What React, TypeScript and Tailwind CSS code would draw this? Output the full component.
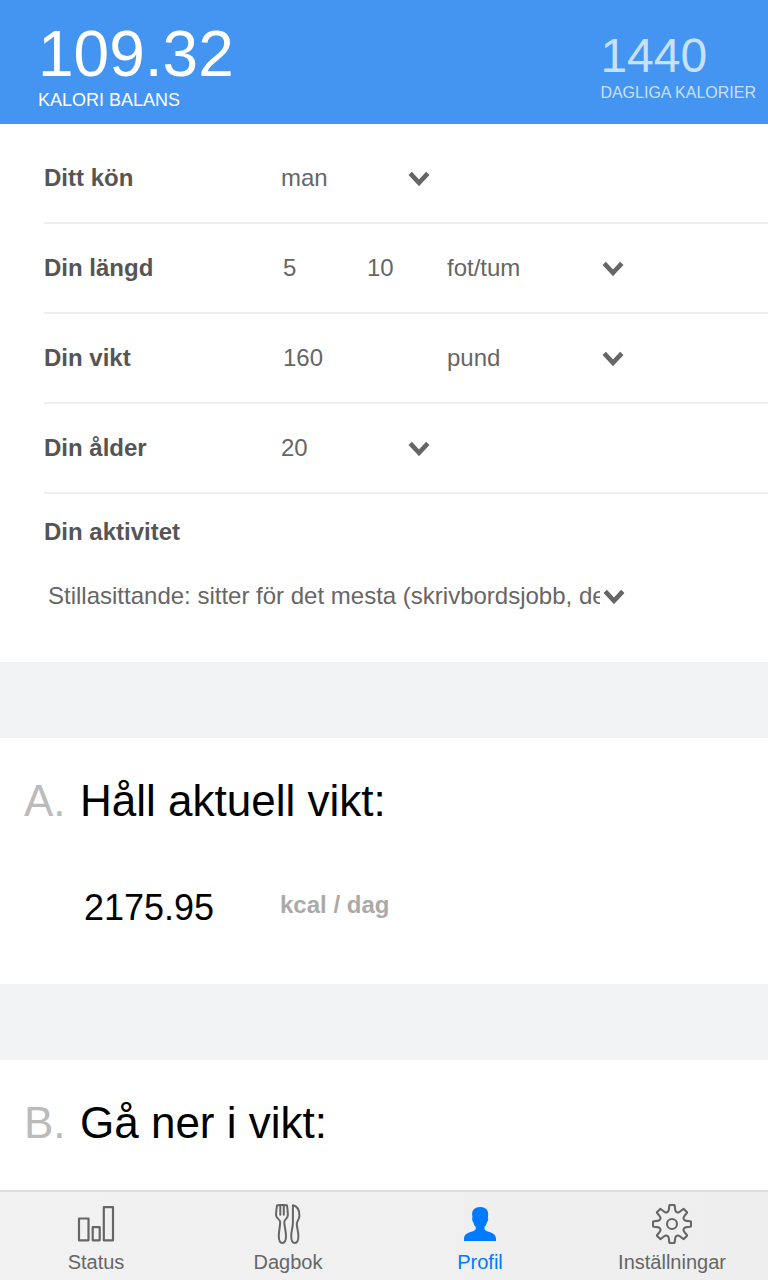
import type { ReactNode, SelectHTMLAttributes } from "react";

function Chevron() {
  return (
    <svg
      viewBox="0 0 22 16"
      className="pointer-events-none absolute right-0 top-1/2 h-4 w-[22px] -translate-y-1/2"
      fill="none"
      stroke="#666666"
      strokeWidth="4.6"
      aria-hidden="true"
    >
      <path d="M2.2 3.4 11 12.8 19.8 3.4" />
    </svg>
  );
}

function Dropdown({
  className,
  selectClassName,
  ...props
}: SelectHTMLAttributes<HTMLSelectElement> & { selectClassName?: string }) {
  return (
    <div className={`relative ${className ?? ""}`}>
      <select
        {...props}
        className={`block h-12 w-full appearance-none truncate bg-transparent text-clip text-[#666666] outline-none ${selectClassName ?? ""}`}
      />
      <Chevron />
    </div>
  );
}

function Row({ label, htmlFor, children }: { label: string; htmlFor: string; children: ReactNode }) {
  return (
    <div className="flex h-[90px] items-center border-b-2 border-[#eeeeee]">
      <label htmlFor={htmlFor} className="w-[237px] shrink-0 font-bold text-[#555555]">
        {label}
      </label>
      {children}
    </div>
  );
}

function StatusIcon() {
  return (
    <svg viewBox="0 0 40 40" className="size-10" fill="none" stroke="currentColor" strokeWidth="2.2" strokeLinejoin="round" aria-hidden="true">
      <rect x="3" y="14.5" width="9.5" height="21.8" />
      <rect x="16.7" y="23.2" width="7" height="13.1" />
      <rect x="27.8" y="3.2" width="9.2" height="33.1" />
    </svg>
  );
}

function DiaryIcon() {
  return (
    <svg viewBox="0 0 40 40" className="size-10" fill="none" stroke="currentColor" strokeWidth="2" strokeLinejoin="round" strokeLinecap="round" aria-hidden="true">
      <path d="M9 1.4C10.5 .8 17.5 .8 19 1.4C19.4 4 19.9 8 19.8 11.5C19.7 14.5 16.4 15.2 16.3 18C16.3 22 18 27 18 32C18 36.5 16.4 38.9 14.3 38.9C12.2 38.9 10.8 36.5 10.8 32C10.8 27 12.2 22 12.2 18C12 15.2 8.3 14.5 8.1 11.5C8 8 8.6 4 9 1.4Z" />
      <path d="M12.3 2V10.8M15.8 2V10.8" />
      <path d="M24.9 1.2C30 2.2 31.4 7 31.4 11.5C31.4 15.5 28.8 17 28.8 20C28.8 23.5 30.4 27.5 30.4 32C30.4 36.5 28.8 38.9 26.8 38.9C24.6 38.9 23.2 36.5 23.2 32C23.2 27 24.9 24 24.9 18Z" />
    </svg>
  );
}

function ProfileIcon() {
  return (
    <svg viewBox="0 0 40 40" className="size-10" fill="currentColor" aria-hidden="true">
      <path d="M20.2 3C25.5 3 28.2 5.8 28.2 10.5C28.2 11.6 27.9 12.3 27.9 13.2C28.6 14.2 28 17.4 27 18.2C26.5 20.6 25.3 22 24.5 23C24.2 25.5 24.8 26.4 27 27.3C31.5 28.8 36 29.8 36 35V37H4V35C4 29.8 8.5 28.8 13 27.3C15.3 26.4 16 25.5 15.8 23C14.8 22 13.7 20.6 13.3 18.2C12.3 17.4 11.7 14.2 12.5 13.2C12.5 12.3 12.1 11.6 12.1 10.5C12.1 5.8 15 3 20.2 3Z" />
    </svg>
  );
}

function gearOutline() {
  const at = (tooth: number, x: number, y: number) => {
    const a = (tooth * Math.PI) / 4;
    const px = 20 + x * Math.cos(a) - y * Math.sin(a);
    const py = 20 + x * Math.sin(a) + y * Math.cos(a);
    return `${px.toFixed(2)} ${py.toFixed(2)}`;
  };
  let d = `M${at(0, -2, -19)}`;
  for (let i = 0; i < 8; i++) {
    d += `L${at(i, 2, -19)}Q${at(i, 2.6, -19)} ${at(i, 2.7, -18.2)}L${at(i, 3.1, -14.6)}`;
    d += `C${at(i, 3.4, -11.6)} ${at(i + 1, -3.4, -11.6)} ${at(i + 1, -3.1, -14.6)}`;
    d += `L${at(i + 1, -2.7, -18.2)}Q${at(i + 1, -2.6, -19)} ${at(i + 1, -2, -19)}`;
  }
  return `${d}Z`;
}

function SettingsIcon() {
  return (
    <svg viewBox="0 0 40 40" className="size-10" fill="none" stroke="currentColor" strokeWidth="2.1" strokeLinejoin="round" aria-hidden="true">
      <path d={gearOutline()} />
      <circle cx="20" cy="20" r="5" />
    </svg>
  );
}

const tabs = [
  { name: "Status", icon: <StatusIcon />, active: false },
  { name: "Dagbok", icon: <DiaryIcon />, active: false },
  { name: "Profil", icon: <ProfileIcon />, active: true },
  { name: "Inställningar", icon: <SettingsIcon />, active: false },
];

export default function App() {
  return (
    <div className="flex h-screen flex-col bg-white font-['Liberation_Sans',Arial,sans-serif] text-2xl">
      <header className="flex h-[124px] shrink-0 justify-between bg-[#4495f1] pl-[38px] pr-3 text-white">
        <div className="flex flex-col pt-[22px]">
          <span className="text-[64px] leading-[64px]">109.32</span>
          <span className="pt-1 text-lg leading-5">KALORI BALANS</span>
        </div>
        <div className="flex flex-col pt-8 text-[#c9e0fb]">
          <span className="text-5xl leading-[48px]">1440</span>
          <span className="pt-1 text-base leading-[18px]">DAGLIGA KALORIER</span>
        </div>
      </header>

      <main className="flex min-h-0 flex-1 flex-col overflow-y-auto bg-[#f1f3f5]">
        <form className="shrink-0 bg-white pb-[42px] pl-11 pt-[10px]">
          <Row label="Ditt kön" htmlFor="sex">
            <Dropdown id="sex" className="w-[149px]" defaultValue="man">
              <option value="man">man</option>
              <option value="kvinna">kvinna</option>
            </Dropdown>
          </Row>
          <Row label="Din längd" htmlFor="feet">
            <input id="feet" defaultValue="5" inputMode="numeric" className="h-12 w-[84px] bg-transparent pl-0.5 text-[#666666] outline-none" />
            <input aria-label="Tum" defaultValue="10" inputMode="numeric" className="h-12 w-[82px] bg-transparent pl-0.5 text-[#666666] outline-none" />
            <Dropdown aria-label="Längdenhet" className="w-[177px]" defaultValue="fot">
              <option value="fot">fot/tum</option>
              <option value="cm">cm</option>
            </Dropdown>
          </Row>
          <Row label="Din vikt" htmlFor="weight">
            <input id="weight" defaultValue="160" inputMode="numeric" className="h-12 w-[166px] bg-transparent pl-0.5 text-[#666666] outline-none" />
            <Dropdown aria-label="Viktenhet" className="w-[177px]" defaultValue="pund">
              <option value="pund">pund</option>
              <option value="kg">kg</option>
            </Dropdown>
          </Row>
          <Row label="Din ålder" htmlFor="age">
            <Dropdown id="age" className="w-[149px]" defaultValue="20">
              <option value="20">20</option>
              <option value="21">21</option>
            </Dropdown>
          </Row>
          <label htmlFor="activity" className="block pt-5 font-bold leading-9 text-[#555555]">
            Din aktivitet
          </label>
          <Dropdown id="activity" className="mt-[22px] w-[581px] max-w-full" selectClassName="pl-1 pr-[25px]" defaultValue="low">
            <option value="low">Stillasittande: sitter för det mesta (skrivbordsjobb, det mesta av dagen)</option>
          </Dropdown>
        </form>

        <section className="mt-[76px] h-[246px] shrink-0 bg-white pl-6 pt-[37px]">
          <h2 className="flex text-[44px] leading-[52px] text-black">
            <span className="w-14 text-[#bbbbbb]">A.</span>
            Håll aktuell vikt:
          </h2>
          <p className="flex items-center pl-[60px] pt-[59px]">
            <span className="w-[196px] text-4xl leading-[44px] text-black">2175.95</span>
            <span className="pb-1.5 font-bold text-[#aaaaaa]">kcal / dag</span>
          </p>
        </section>

        <section className="mt-[76px] flex-1 bg-white pl-6 pt-[37px]">
          <h2 className="flex text-[44px] leading-[52px] text-black">
            <span className="w-14 text-[#bbbbbb]">B.</span>
            Gå ner i vikt:
          </h2>
        </section>
      </main>

      <nav className="grid h-[90px] shrink-0 grid-cols-4 border-t-2 border-[#dddddd] bg-linear-to-r from-[#f2f2f2] via-[#f0f0f0] to-[#eeeeee]">
        {tabs.map((tab) => (
          <a
            key={tab.name}
            href="#"
            aria-current={tab.active ? "page" : undefined}
            className={`flex flex-col items-center pt-3 ${tab.active ? "text-[#007aff]" : "text-[#666666]"}`}
          >
            {tab.icon}
            <span className="pt-1.5 text-xl leading-6">{tab.name}</span>
          </a>
        ))}
      </nav>
    </div>
  );
}
